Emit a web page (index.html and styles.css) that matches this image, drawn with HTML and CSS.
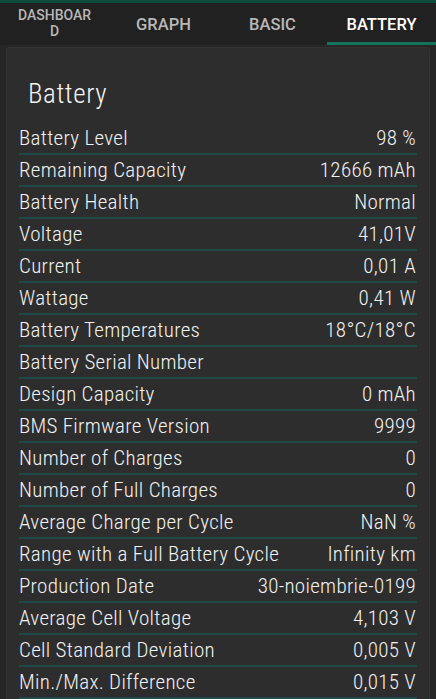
FILE: index.html
```html
<!DOCTYPE html>
<html lang="en">
<head>
  <meta charset="UTF-8" />
  <meta name="viewport" content="width=device-width, initial-scale=1.0" />
  <title>Battery</title>
  <link rel="stylesheet" href="styles.css">
</head>
<body>
  <div class="top-strip"></div>
  <nav class="tabs">
    <div class="tab small"><span>DASHBOAR<br>D</span></div>
    <div class="tab">GRAPH</div>
    <div class="tab">BASIC</div>
    <div class="tab active">BATTERY</div>
  </nav>

  <main class="page">
    <section class="card">
      <h1 class="title">Battery</h1>
      <div class="row"><span>Battery Level</span><span>98 %</span></div>
      <div class="row"><span>Remaining Capacity</span><span>12666 mAh</span></div>
      <div class="row"><span>Battery Health</span><span>Normal</span></div>
      <div class="row"><span>Voltage</span><span>41,01V</span></div>
      <div class="row"><span>Current</span><span>0,01 A</span></div>
      <div class="row"><span>Wattage</span><span>0,41 W</span></div>
      <div class="row"><span>Battery Temperatures</span><span>18°C/18°C</span></div>
      <div class="row"><span>Battery Serial Number</span><span></span></div>
      <div class="row"><span>Design Capacity</span><span>0 mAh</span></div>
      <div class="row"><span>BMS Firmware Version</span><span>9999</span></div>
      <div class="row"><span>Number of Charges</span><span>0</span></div>
      <div class="row"><span>Number of Full Charges</span><span>0</span></div>
      <div class="row"><span>Average Charge per Cycle</span><span>NaN %</span></div>
      <div class="row"><span>Range with a Full Battery Cycle</span><span>Infinity km</span></div>
      <div class="row"><span>Production Date</span><span>30-noiembrie-0199</span></div>
      <div class="row"><span>Average Cell Voltage</span><span>4,103 V</span></div>
      <div class="row"><span>Cell Standard Deviation</span><span>0,005 V</span></div>
      <div class="row"><span>Min./Max. Difference</span><span>0,015 V</span></div>
    </section>
  </main>
</body>
</html>
```

FILE: styles.css
```css
body {
  margin: 0;
  background: #262626;
  font-family: Roboto, "Noto Sans", sans-serif;
  color: #f2f2f2;
  overflow: hidden;
}

.top-strip {
  height: 3px;
  background: #0e4a3a;
}

.tabs {
  display: grid;
  grid-template-columns: repeat(4, 1fr);
  height: 42px;
  background: #212121;
}

.tab {
  display: flex;
  justify-content: center;
  align-items: center;
  font-size: 16.5px;
  font-weight: 500;
  color: #b8b8b8;
  padding-top: 3px;
  border-bottom: 3px solid transparent;
  box-sizing: border-box;
}

.tab.small {
  font-size: 14px;
  line-height: 16px;
  text-align: center;
  padding-top: 1px;
}

.tab.active {
  color: #ffffff;
  border-bottom-color: #11745a;
}

.page {
  padding: 2px 6px 0;
}

.card {
  background: #2d2d2d;
  border: 1px solid #333;
  border-radius: 3px;
  padding: 0 12px 20px 12px;
  min-height: 700px;
}

.title {
  margin: 0;
  font-size: 27px;
  font-weight: 360;
  font-stretch: 87.5%;
  letter-spacing: 0.6px;
  padding: 30px 0 13px 9px;
  line-height: 32px;
  color: #f5f5f5;
}

.row {
  display: flex;
  justify-content: space-between;
  align-items: center;
  height: 30px;
  font-size: 21px;
  font-weight: 340;
  font-stretch: 87.5%;
  letter-spacing: 0.3px;
  border-bottom: 2px solid #1e4a47;
}

.row span:last-child {
  margin-right: 1px;
}
```
